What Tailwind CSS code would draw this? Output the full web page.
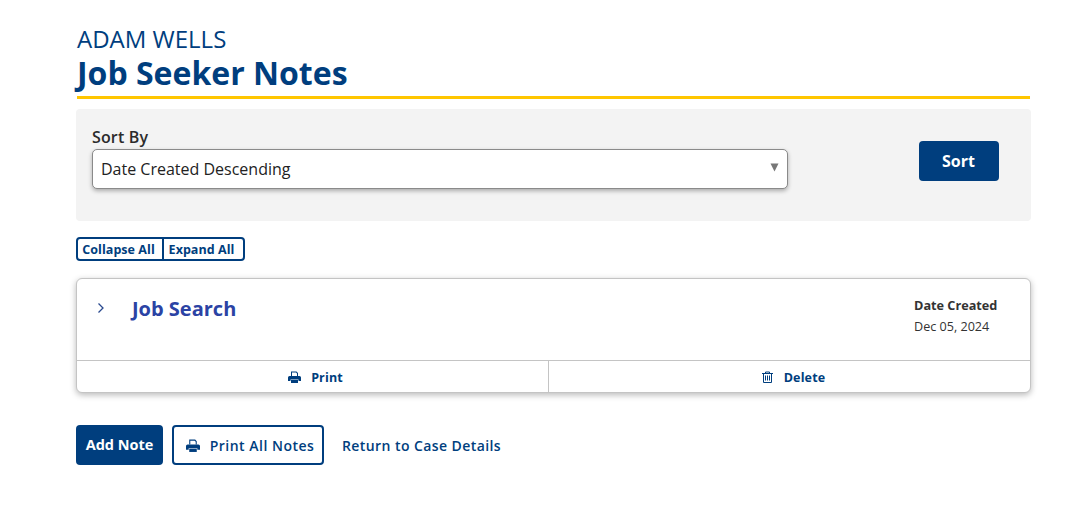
<!DOCTYPE html>
<html lang="en">
<head>
    <meta charset="UTF-8">
    <title>Job Seeker Notes</title>
    <script src="https://cdn.jsdelivr.net/npm/@tailwindcss/browser@4"></script>
</head>
<body class="bg-white font-['Open_Sans',sans-serif] overflow-hidden">
    <div class="w-[955px] ml-[76px] pt-[24px]">

        <!-- Heading -->
        <header class="px-px">
            <p class="text-[24px] leading-[29px] text-[#003e7e]">ADAM WELLS</p>
            <h1 class="text-[32px] leading-[40px] font-bold text-[#003e7e]">Job Seeker Notes</h1>
            <div class="h-[3px] bg-[#ffc600] mt-[3px]"></div>
        </header>

        <!-- Sort panel -->
        <section class="mt-[10px] h-[112px] bg-[#f3f3f3] rounded-[4px] pl-4 pr-8 flex justify-between">
            <div class="pt-[17px]">
                <label class="block text-[16px] leading-[23px] font-semibold text-[#2b2b2b] tracking-[0.15px]">Sort By</label>
                <div class="w-[696px] h-[40px] bg-white border border-[#8a8a8a] rounded-[5px] shadow-[0_2px_4px_rgba(0,0,0,0.3)] flex items-center justify-between pl-2 pr-[8px]">
                    <span class="text-[16px] text-[#222]">Date Created Descending</span>
                    <svg class="w-[9px] h-[9px] mb-[3px]" viewBox="0 0 9 9"><path d="M0.5 0.5h8L4.5 8.5z" fill="#777"/></svg>
                </div>
            </div>
            <div class="pt-8">
                <button class="w-20 h-10 bg-[#003e7e] text-white rounded-[4px] text-[16px] font-bold pr-px">Sort</button>
            </div>
        </section>

        <!-- Collapse / expand -->
        <div class="mt-4 flex w-fit h-6 border-2 border-[#003e7e] rounded-[4px] text-[12.5px] font-bold text-[#003e7e] leading-[22px]">
            <button class="w-[84px] pl-1 pr-[7px] text-center tracking-[0.05px] whitespace-nowrap">Collapse All</button>
            <button class="w-[81px] border-l-2 border-[#003e7e] pr-[4px] text-center tracking-[0.05px] whitespace-nowrap">Expand All</button>
        </div>

        <!-- Note card -->
        <article class="mt-[17px] h-[115px] bg-white border border-[#c4c4c4] rounded-[6px] shadow-[0_2px_6px_rgba(0,0,0,0.28)] flex flex-col">
            <div class="h-[81px] flex justify-between">
                <div class="flex pt-[15px] pl-5">
                    <svg class="w-[8px] h-[12px] mt-[8px]" viewBox="0 0 8 12" fill="none"><path d="M1.5 1.5L6 6l-4.5 4.5" stroke="#2a4a8f" stroke-width="1.3"/></svg>
                    <h2 class="ml-[27px] text-[20px] leading-[30px] font-bold text-[#2b43a4]">Job Search</h2>
                </div>
                <div class="pt-[18px] w-[116px]">
                    <p class="text-[12.7px] leading-[17px] font-bold text-[#333]">Date Created</p>
                    <p class="text-[12.6px] leading-[17px] mt-[4px] text-[#333]">Dec 05, 2024</p>
                </div>
            </div>
            <div class="flex flex-1 border-t border-[#c4c4c4] text-[12.5px] font-bold text-[#003e7e] tracking-[0.15px]">
                <button class="w-[472px] pl-[6px] border-r border-[#c4c4c4] flex items-center justify-center gap-[10px]">
                    <svg class="w-[13px] h-[12px]" viewBox="0 0 13 12" fill="#003e7e"><path d="M3 0.5h5.5L10 2v3H9V2.5L8 1.5H4V5H3z"/><path d="M1.5 5h10A1.5 1.5 0 0 1 13 6.5V10h-2.5V8.5h-8V10H0V6.5A1.5 1.5 0 0 1 1.5 5z"/><path d="M3 9h7v3H3z"/></svg>
                    <span class="pt-[4px]">Print</span>
                </button>
                <button class="flex-1 pl-[8px] flex items-center justify-center gap-[11px]">
                    <svg class="w-[11px] h-[12px]" viewBox="0 0 11 12" fill="none" stroke="#003e7e"><path d="M0 2.5h11M3.5 2.5V1h4v1.5M1.5 2.5v9h8v-9M3.5 4.5v5M5.5 4.5v5M7.5 4.5v5"/></svg>
                    <span class="pt-[4px]">Delete</span>
                </button>
            </div>
        </article>

        <!-- Page actions -->
        <div class="mt-8 flex items-start">
            <button class="w-[87px] h-10 bg-[#003e7e] text-white rounded-[4px] text-[14.5px] font-bold">Add Note</button>
            <button class="ml-[9px] w-[152px] h-10 pl-[4px] border-2 border-[#003e7e] rounded-[4px] text-[14px] font-semibold text-[#003e7e] tracking-[0.5px] flex items-center justify-center gap-[10px]">
                <svg class="w-[14px] h-[13px]" viewBox="0 0 13 12" fill="#003e7e"><path d="M3 0.5h5.5L10 2v3H9V2.5L8 1.5H4V5H3z"/><path d="M1.5 5h10A1.5 1.5 0 0 1 13 6.5V10h-2.5V8.5h-8V10H0V6.5A1.5 1.5 0 0 1 1.5 5z"/><path d="M3 9h7v3H3z"/></svg>
                <span>Print All Notes</span>
            </button>
            <a class="ml-[18px] text-[14px] leading-10 font-semibold text-[#003e7e] tracking-[0.42px] mt-px">Return to Case Details</a>
        </div>
    </div>
</body>
</html>
